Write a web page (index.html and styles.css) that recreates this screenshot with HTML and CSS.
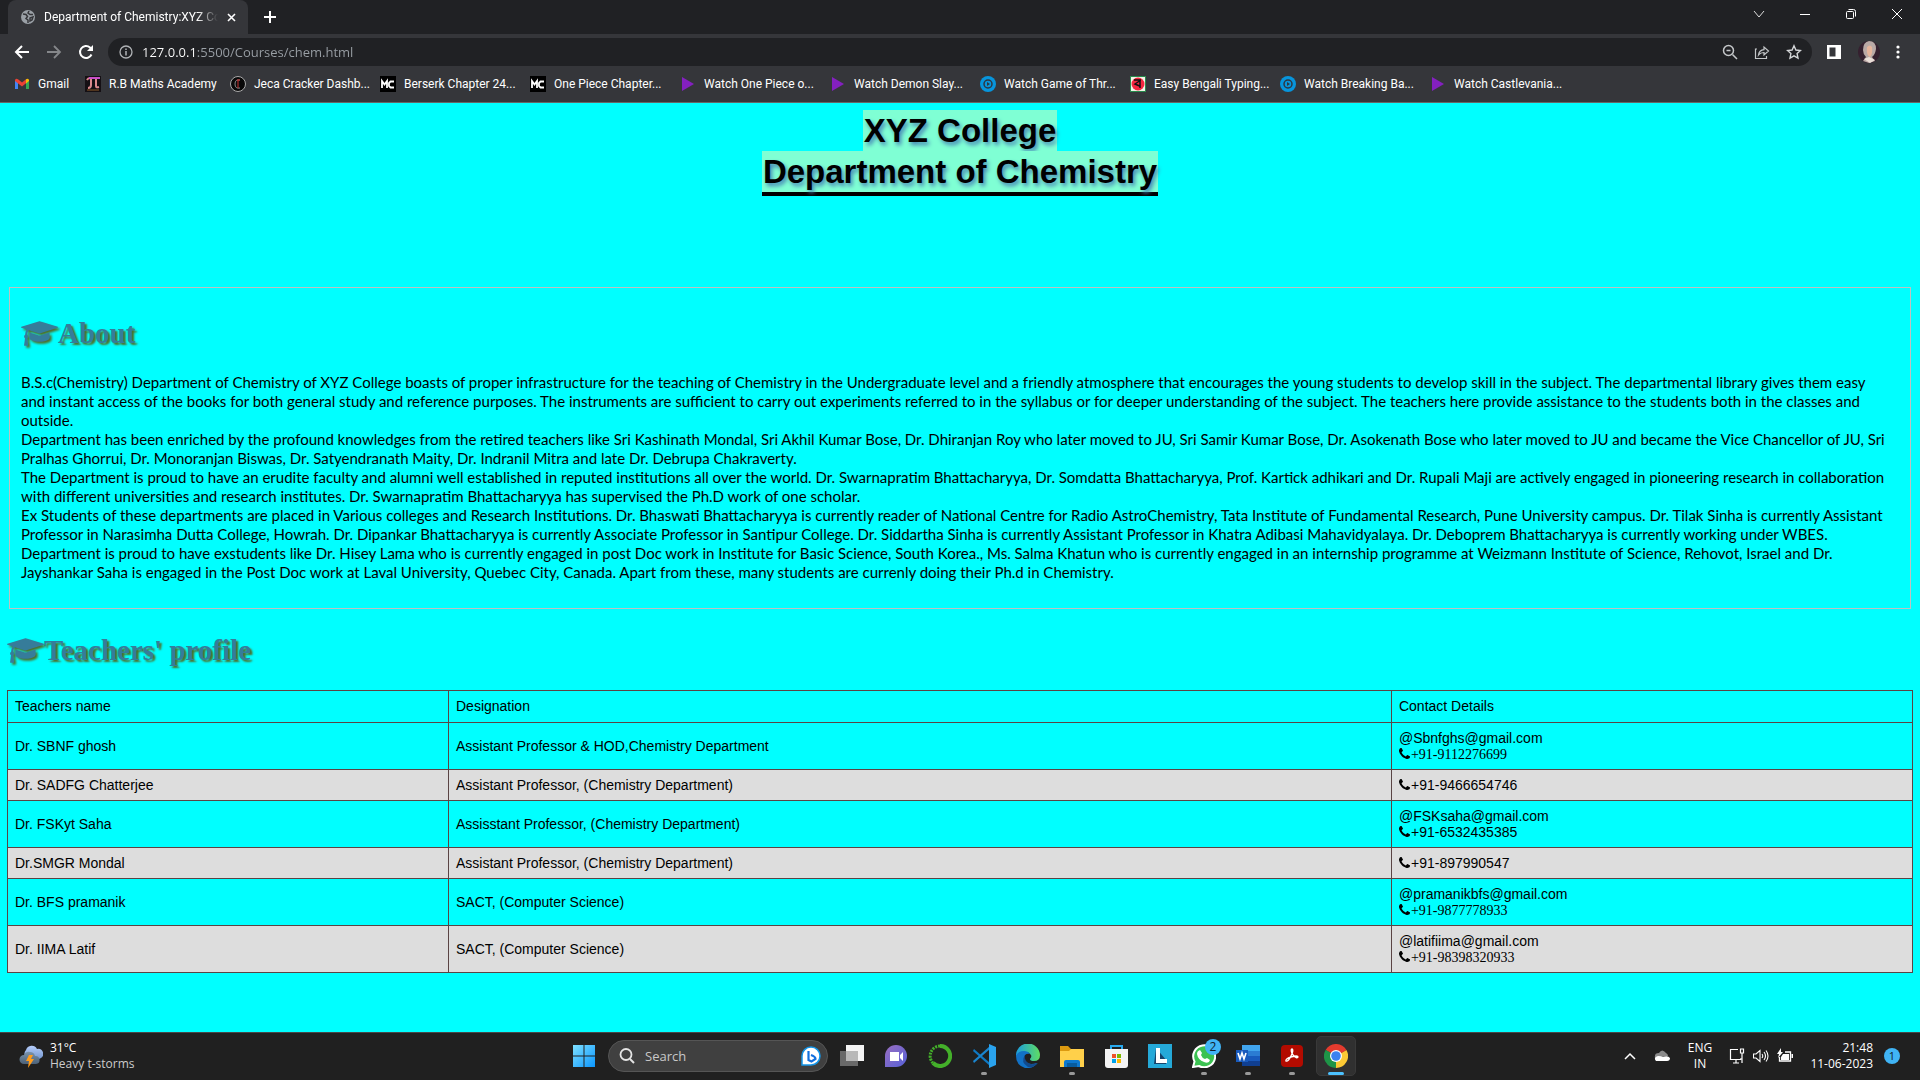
FILE: index.html
```html
<!DOCTYPE html>
<html lang="en">
<head>
<meta charset="utf-8">
<title>Department of Chemistry:XYZ College</title>
<link rel="stylesheet" href="styles.css">
</head>
<body>
<svg class="defs" width="0" height="0" aria-hidden="true">
  <defs>
    <symbol id="cap" viewBox="0 0 2304 1792"><path d="M1774 836l18 316q4 69-82 128t-235 93.500-323 34.500-323-34.500-235-93.500-82-128l18-316 574 181q22 7 48 7t48-7zM2304 512q0 23-22 31l-1120 352q-4 1-10 1t-10-1L490 690q-43 34-71 111.500T385 980q63 36 63 109 0 69-58 107l58 433q2 14-8 25-9 11-24 11H224q-15 0-24-11-10-11-8-25l58-433q-58-38-58-107 0-73 65-111 11-207 98-330L22 543Q0 535 0 512t22-31L1142 129q4-1 10-1t10 1l1120 352q22 8 22 31z"/></symbol>
    <symbol id="phone" viewBox="192 128 1408 1408"><path d="M1600 1240q0 27-10 70.500t-21 68.500q-21 50-122 106-94 51-186 51-27 0-53-3.500t-57.500-12.500-47-14.500T1048 1485t-49-18q-98-35-175-83-127-79-264-216T344 904q-48-77-83-175-3-9-18-49t-20.500-55.500-14.500-47T195.500 520t-3.500-53q0-92 51-186 56-101 106-122 25-11 68.500-21t70.500-10q14 0 21 3 18 6 53 76 11 19 30 54t35 63.500 31 53.500q3 4 17.500 25t21.500 35.500 7 28.500q0 20-28.500 50t-62 55-62 53-28.500 46q0 9 5 22.500t8.500 20.500 14 24 11.500 19q76 137 174 235t235 174q2 1 19 11.500t24 14 20.500 8.500 22.500 5q18 0 46-28.500t53-62 55-62 50-28.500q14 0 28.500 7t35.500 21.500 25 17.500q25 15 53.500 31t63.500 35 54 30q70 35 76 53 3 7 3 21z"/></symbol>
    <symbol id="play" viewBox="0 0 16 16"><path d="M2 1l12 7-12 7z" fill="#8420c0"/></symbol>
    <symbol id="disc" viewBox="0 0 16 16"><circle cx="8" cy="8" r="8" fill="#0795dc"/><circle cx="8" cy="8" r="4" fill="none" stroke="#2f3740" stroke-width="1.500"/><path d="M7 6l3 2-3 2z" fill="#2f3740"/></symbol>
    <symbol id="mc" viewBox="0 0 16 16"><path d="M0 0h16v16H0z" fill="#000"/><path d="M2 12V5l2.500 3.500L7 5v7M14 5.500h-3.500L9 7v3l1.500 1.500H14" fill="none" stroke="#fff" stroke-width="1.800"/></symbol>
  </defs>
</svg>

<header class="browser">
  <div class="tabstrip">
    <div class="tab">
      <svg width="14" height="14" viewBox="0 0 14 14"><circle cx="7" cy="7" r="7" fill="#9aa0a6"/><path d="M2 4l3 .5 1.500 2L5 8.500 7 10v3M8 1l-1 2 2 1.500h3M9 8l3-1-1 3-2 1z" fill="none" stroke="#35363a" stroke-width="1.500"/></svg>
      <span class="tab-title">Department of Chemistry:XYZ College</span>
      <button class="plain" aria-label="Close tab"><svg width="9" height="9" viewBox="0 0 9 9"><path d="M1 1l7 7M8 1L1 8" stroke="#fff" stroke-width="1.600"/></svg></button>
    </div>
    <button class="plain new-tab" aria-label="New tab"><svg width="12" height="12" viewBox="0 0 12 12"><path d="M6 0v12M0 6h12" stroke="#fff" stroke-width="2"/></svg></button>
    <div class="window-controls">
      <button class="plain" aria-label="Search tabs"><svg width="12" height="12" viewBox="0 0 12 12"><path d="M1 3l5 6 5-6" fill="none" stroke="#ddd"/></svg></button>
      <button class="plain" aria-label="Minimize"><svg width="10" height="12" viewBox="0 0 10 12"><path d="M0 6.500h10" stroke="#fff"/></svg></button>
      <button class="plain" aria-label="Restore"><svg width="12" height="12" viewBox="0 0 12 12"><rect x="1.500" y="3.500" width="7" height="7" rx="1" fill="none" stroke="#fff"/><path d="M3.500 1.500h5a2 2 0 0 1 2 2v5" fill="none" stroke="#fff"/></svg></button>
      <button class="plain" aria-label="Close"><svg width="12" height="12" viewBox="0 0 12 12"><path d="M1 1l10 10M11 1L1 11" stroke="#fff"/></svg></button>
    </div>
  </div>

  <div class="toolbar">
    <div class="nav-buttons">
      <button class="plain" aria-label="Back"><svg width="16" height="16" viewBox="0 0 16 16"><path d="M15 8H2M8 2L2 8l6 6" fill="none" stroke="#fff" stroke-width="2"/></svg></button>
      <button class="plain" aria-label="Forward"><svg width="16" height="16" viewBox="0 0 16 16"><path d="M1 8h13M8 2l6 6-6 6" fill="none" stroke="#85878a" stroke-width="1.800"/></svg></button>
      <button class="plain" aria-label="Reload"><svg width="16" height="16" viewBox="0 0 16 16"><path d="M13.500 10.500A6 6 0 1 1 12 3.500l1.500 1.500" fill="none" stroke="#fff" stroke-width="2"/><path d="M15 1v6H9z" fill="#fff"/></svg></button>
    </div>
    <div class="omnibox">
      <svg width="14" height="14" viewBox="0 0 14 14"><circle cx="7" cy="7" r="6" fill="none" stroke="#b0b3b6" stroke-width="1.300"/><path d="M7 6v4.500M7 3.500V5" stroke="#b0b3b6" stroke-width="1.500"/></svg>
      <input class="url" type="text" aria-label="Address" value="127.0.0.1:5500/Courses/chem.html">
      <button class="plain" aria-label="Zoom"><svg width="16" height="16" viewBox="0 0 16 16"><circle cx="6.500" cy="6.500" r="5" fill="none" stroke="#c4c7c9" stroke-width="1.500"/><path d="M10.500 10.500L15 15M4.500 6.500h4" stroke="#c4c7c9" stroke-width="1.500"/></svg></button>
      <button class="plain" aria-label="Share"><svg width="16" height="16" viewBox="0 0 16 16"><path d="M3 5H1.500v9.500h11V12M4.500 11c.5-4 2.500-5 5.500-5.300V3l4.500 4-4.500 4V8.500C7.500 8.500 6 9 4.500 11z" fill="none" stroke="#c4c7c9" stroke-width="1.200"/></svg></button>
      <button class="plain" aria-label="Bookmark"><svg width="16" height="16" viewBox="0 0 16 16"><path d="M8 1.800l1.900 4.200 4.600.5-3.400 3.100.9 4.600L8 11.900l-4 2.300.9-4.600L1.500 6.500 6.100 6z" fill="none" stroke="#d4d6d8" stroke-width="1.400"/></svg></button>
    </div>
    <div class="profile-buttons">
      <button class="plain" aria-label="Side panel"><svg width="14" height="14" viewBox="0 0 14 14"><path d="M0 0h14v14H0zM2.500 2.500v9h6v-9z" fill="#fff" fill-rule="evenodd"/></svg></button>
      <button class="plain" aria-label="Profile"><svg width="22" height="22" viewBox="0 0 22 22"><circle cx="11" cy="11" r="11" fill="#35202f"/><path d="M5 9Q5 1 11 0q7 0 7 8-1 6-4 8l3 4-6 2-6-2 3-4Q5 13 5 9z" fill="#b9a9a6"/><path d="M9 6q3-3 5 0 1 7-2 10-4-2-3-10z" fill="#e6b49c"/><path d="M6 18l5-2 6 3-5 3z" fill="#eadfd8"/></svg></button>
      <button class="plain" aria-label="Menu"><svg width="4" height="14" viewBox="0 0 4 14"><circle cx="2" cy="2" r="1.600" fill="#fff"/><circle cx="2" cy="7" r="1.600" fill="#fff"/><circle cx="2" cy="12" r="1.600" fill="#fff"/></svg></button>
    </div>
  </div>

  <nav class="bookmarks" aria-label="Bookmarks">
    <a class="bookmark short" href="#"><svg viewBox="0 0 16 16"><path d="M1 13V4l3 2v7z" fill="#4285f4"/><path d="M12 6l3-2v9h-3z" fill="#34a853"/><path d="M1 4q1-2 3-.7L8 6.500l4-3.200v4L8 10.500 1 5z" fill="#ea4335"/><path d="M12 3.300Q14 2 15 4v1l-3 2.500z" fill="#fbbc04"/></svg>Gmail</a>
    <a class="bookmark medium" href="#"><svg viewBox="0 0 16 16"><path d="M0 0h16v16H0z" fill="#151014"/><path d="M2 4q1-2 3-2h10M6 2v7q0 3-3 3M11 2v8q0 2 3 1" fill="none" stroke="#dc8a8e" stroke-width="2"/><path d="M4 2h11" stroke="#c94fc8" stroke-width="2"/><path d="M2 14h12" stroke="#8b5b28"/></svg>R.B Maths Academy</a>
    <a class="bookmark" href="#"><svg viewBox="0 0 16 16"><circle cx="8" cy="8" r="7.500" fill="#080808" stroke="#aaa"/><path d="M10 4q-5-1-5 4t5 4" fill="none" stroke="#888"/><path d="M8 4v8M7 4h3" stroke="#c53030"/></svg>Jeca Cracker Dashb...</a>
    <a class="bookmark" href="#"><svg><use href="#mc"/></svg>Berserk Chapter 24...</a>
    <a class="bookmark" href="#"><svg><use href="#mc"/></svg>One Piece Chapter...</a>
    <a class="bookmark" href="#"><svg><use href="#play"/></svg>Watch One Piece o...</a>
    <a class="bookmark" href="#"><svg><use href="#play"/></svg>Watch Demon Slay...</a>
    <a class="bookmark" href="#"><svg><use href="#disc"/></svg>Watch Game of Thr...</a>
    <a class="bookmark" href="#"><svg viewBox="0 0 16 16"><path d="M.5.500h15v15H.5z" fill="#f4f4e8" stroke="#268b4c"/><circle cx="8" cy="8" r="6.500" fill="#f5273f"/><path d="M4 4h7M10 4v8M9.500 5L5 8l4.500 2" fill="none" stroke="#111" stroke-width="1.500"/></svg>Easy Bengali Typing...</a>
    <a class="bookmark" href="#"><svg><use href="#disc"/></svg>Watch Breaking Ba...</a>
    <a class="bookmark" href="#"><svg><use href="#play"/></svg>Watch Castlevania...</a>
  </nav>
</header>

<main class="page">
  <h1 class="banner">
    <span class="banner-line">XYZ College</span>
    <span class="banner-line underlined">Department of Chemistry</span>
  </h1>

  <section class="about">
    <h2><svg class="cap"><use href="#cap"/></svg>About</h2>
    <p>B.S.c(Chemistry) Department of Chemistry of XYZ College boasts of proper infrastructure for the teaching of Chemistry in the Undergraduate level and a friendly atmosphere that encourages the young students to develop skill in the subject. The departmental library gives them easy<br>
    and instant access of the books for both general study and reference purposes. The instruments are sufficient to carry out experiments referred to in the syllabus or for deeper understanding of the subject. The teachers here provide assistance to the students both in the classes and<br>
    outside.</p>
    <p>Department has been enriched by the profound knowledges from the retired teachers like Sri Kashinath Mondal, Sri Akhil Kumar Bose, Dr. Dhiranjan Roy who later moved to JU, Sri Samir Kumar Bose, Dr. Asokenath Bose who later moved to JU and became the Vice Chancellor of JU, Sri<br>
    Pralhas Ghorrui, Dr. Monoranjan Biswas, Dr. Satyendranath Maity, Dr. Indranil Mitra and late Dr. Debrupa Chakraverty.</p>
    <p>The Department is proud to have an erudite faculty and alumni well established in reputed institutions all over the world. Dr. Swarnapratim Bhattacharyya, Dr. Somdatta Bhattacharyya, Prof. Kartick adhikari and Dr. Rupali Maji are actively engaged in pioneering research in collaboration<br>
    with different universities and research institutes. Dr. Swarnapratim Bhattacharyya has supervised the Ph.D work of one scholar.</p>
    <p>Ex Students of these departments are placed in Various colleges and Research Institutions. Dr. Bhaswati Bhattacharyya is currently reader of National Centre for Radio AstroChemistry, Tata Institute of Fundamental Research, Pune University campus. Dr. Tilak Sinha is currently Assistant<br>
    Professor in Narasimha Dutta College, Howrah. Dr. Dipankar Bhattacharyya is currently Associate Professor in Santipur College. Dr. Siddartha Sinha is currently Assistant Professor in Khatra Adibasi Mahavidyalaya. Dr. Deboprem Bhattacharyya is currently working under WBES.</p>
    <p>Department is proud to have exstudents like Dr. Hisey Lama who is currently engaged in post Doc work in Institute for Basic Science, South Korea., Ms. Salma Khatun who is currently engaged in an internship programme at Weizmann Institute of Science, Rehovot, Israel and Dr.<br>
    Jayshankar Saha is engaged in the Post Doc work at Laval University, Quebec City, Canada. Apart from these, many students are currenly doing their Ph.d in Chemistry.</p>
  </section>

  <section class="teachers">
    <h2><svg class="cap"><use href="#cap"/></svg>Teachers' profile</h2>
    <table>
      <colgroup><col class="col-name"><col class="col-role"><col></colgroup>
      <thead>
        <tr><th>Teachers name</th><th>Designation</th><th>Contact Details</th></tr>
      </thead>
      <tbody>
        <tr><td>Dr. SBNF ghosh</td><td>Assistant Professor &amp; HOD,Chemistry Department</td><td>@Sbnfghs@gmail.com<br><svg class="phone"><use href="#phone"/></svg><span class="serif">+91-9112276699</span></td></tr>
        <tr><td>Dr. SADFG Chatterjee</td><td>Assistant Professor, (Chemistry Department)</td><td><svg class="phone"><use href="#phone"/></svg>+91-9466654746</td></tr>
        <tr><td>Dr. FSKyt Saha</td><td>Assisstant Professor, (Chemistry Department)</td><td>@FSKsaha@gmail.com<br><svg class="phone"><use href="#phone"/></svg>+91-6532435385</td></tr>
        <tr><td>Dr.SMGR Mondal</td><td>Assistant Professor, (Chemistry Department)</td><td><svg class="phone"><use href="#phone"/></svg>+91-897990547</td></tr>
        <tr><td>Dr. BFS pramanik</td><td>SACT, (Computer Science)</td><td>@pramanikbfs@gmail.com<br><svg class="phone"><use href="#phone"/></svg><span class="serif">+91-9877778933</span></td></tr>
        <tr><td>Dr. IIMA Latif</td><td>SACT, (Computer Science)</td><td>@latifiima@gmail.com<br><svg class="phone"><use href="#phone"/></svg><span class="serif">+91-98398320933</span></td></tr>
      </tbody>
    </table>
  </section>
</main>

<footer class="taskbar">
  <button class="plain weather">
    <svg width="24" height="24" viewBox="0 0 24 24"><defs><linearGradient id="cl" x2="0" y2="1"><stop stop-color="#b5cdfa"/><stop offset="1" stop-color="#6f92cc"/></linearGradient><linearGradient id="cd" x2="0" y2="1"><stop stop-color="#7b93ab"/><stop offset="1" stop-color="#4b6178"/></linearGradient></defs><path d="M8 14a5 5 0 0 1-1-8 6 6 0 0 1 11-1 5 5 0 0 1 4 9l-4 2z" fill="url(#cl)"/><path d="M5 20a4.500 4.500 0 0 1 0-9q2-4 6-3 4 0 5 4a4 4 0 0 1 1 8z" fill="url(#cd)"/><path d="M10 11h4l-2 4h3l-6 9 1-7H7z" fill="#ff9d1c"/></svg>
    <span class="weather-text"><span class="bright">31°C</span><span>Heavy t-storms</span></span>
  </button>

  <div class="apps">
    <button class="plain app" aria-label="Start"><svg viewBox="0 0 24 24"><defs><linearGradient id="win" x2="1" y2="1"><stop stop-color="#7ee0ff"/><stop offset="1" stop-color="#0a96ff"/></linearGradient></defs><path d="M1 1h10.500v10.500H1zM12.500 1H23v10.500H12.500zM1 12.500h10.500V23H1zM12.500 12.500H23V23H12.500z" fill="url(#win)"/></svg></button>
    <label class="search">
      <svg width="16" height="16" viewBox="0 0 16 16"><circle cx="7" cy="6.500" r="5.500" fill="none" stroke="#e4e4e4" stroke-width="1.800"/><path d="M11 11l4 4" stroke="#e4e4e4" stroke-width="2"/></svg>
      <input type="search" placeholder="Search" aria-label="Search">
      <svg width="20" height="20" viewBox="0 0 20 20"><path d="M1 19V10a9 9 0 1 1 9 9z" fill="#fff" stroke="#1495e8" stroke-width="1.500"/><path d="M7.500 5v9l3 1.500 4-2.500q0-2.500-4.500-4" fill="none" stroke="#126fdd" stroke-width="2.200"/></svg>
    </label>
    <button class="plain app" aria-label="Task view"><svg viewBox="0 0 24 24"><path d="M6 1h18v16H6z" fill="#f4f4f4"/><path d="M0 7h18v15H0z" fill="#777" opacity=".85"/><path d="M6 7h12v10H6z" fill="#b8b8b8"/></svg></button>
    <button class="plain app" aria-label="Chat"><svg viewBox="0 0 24 24"><defs><linearGradient id="chat" x2="1" y2="1"><stop stop-color="#9a6fc0"/><stop offset="1" stop-color="#5560d8"/></linearGradient></defs><path d="M1 23V12A11 11 0 1 1 12 23z" fill="url(#chat)"/><path d="M6 8h9v9H6zM16 11l3-3v9l-3-3z" fill="#fff"/></svg></button>
    <button class="plain app" aria-label="Anaconda"><svg viewBox="0 0 24 24"><path d="M12 2a10 10 0 1 1-7 17" fill="none" stroke="#44b02a" stroke-width="4"/><path d="M5 19A10 10 0 0 1 12 2" fill="none" stroke="#44b02a" stroke-width="3" stroke-dasharray="2 1"/></svg></button>
    <button class="plain app running" aria-label="Visual Studio Code"><svg viewBox="0 0 24 24"><path d="M2 5l16 14v3L1 7z" fill="#0f79c4"/><path d="M2 19L18 5V2L1 17z" fill="#1a85cf"/><path d="M17 0l7 3v18l-7 3z" fill="#2aa3ee"/></svg></button>
    <button class="plain app" aria-label="Edge"><svg viewBox="0 0 24 24"><defs><linearGradient id="edge" x2="1"><stop stop-color="#1a9de0"/><stop offset="1" stop-color="#5fdd62"/></linearGradient></defs><path d="M0 12a12 12 0 0 1 24-1q0 6-6 6-4 0-4-2 2-2 1-4-3-5-9-2-4 2-6 3z" fill="url(#edge)"/><path d="M0 12q2-5 8-5 4 0 6 3-6-1-6 5 2 7 13 4-4 6-12 5Q0 21 0 12z" fill="#1272c6"/><path d="M9 11q-5 7 3 12 6 1 10-4-8 3-12-2-2-3-1-6z" fill="#124a8c"/></svg></button>
    <button class="plain app running" aria-label="File Explorer"><svg viewBox="0 0 24 24"><path d="M0 2h8l3 3h13v8H0z" fill="#dc9a10"/><path d="M0 7h9l2-2h13v18H0z" fill="#ffd04a"/><path d="M4 23v-5q0-2 2-2h12q2 0 2 2v5z" fill="#0d78cf"/><path d="M7 19h10v4H7z" fill="#085c9e"/></svg></button>
    <button class="plain app" aria-label="Microsoft Store"><svg viewBox="0 0 24 24"><path d="M7 7V2h11v5" fill="none" stroke="#28a9ee" stroke-width="2"/><path d="M1 5h23v16q0 3-3 3H4q-3 0-3-3z" fill="#f4f4f4"/><path d="M8 10h4v4H8z" fill="#f0512a"/><path d="M13 10h4v4h-4z" fill="#7db900"/><path d="M8 15h4v4H8z" fill="#00a3ec"/><path d="M13 15h4v4h-4z" fill="#ffb700"/></svg></button>
    <button class="plain app" aria-label="L"><svg viewBox="0 0 24 24"><path d="M0 0h24v24H0z" fill="#25a9d8"/><path d="M8 4L6 20h12l1-3z" fill="#17446b"/><path d="M8 4h4v11h7v4H8z" fill="#fff"/></svg></button>
    <button class="plain app running" aria-label="WhatsApp"><svg viewBox="0 0 24 24"><path d="M1 23l1.500-5.500A11 11 0 1 1 7 22z" fill="#3cc252" stroke="#fff" stroke-width="2"/><path d="M8 6l2 3-1 2q1 3 4 4l2-1 3 2q-1 4-6 2-6-2-7-8 0-3 3-4z" fill="#fff"/></svg><span class="badge">2</span></button>
    <button class="plain app running" aria-label="Word"><svg viewBox="0 0 24 24"><path d="M6 1h18v6H6z" fill="#41a5ee"/><path d="M6 7h18v5H6z" fill="#2b7cd3"/><path d="M6 12h18v5H6z" fill="#185abd"/><path d="M6 17h18v5H6z" fill="#103f91"/><path d="M0 6h12v12H0z" fill="#185abd"/><path d="M2 9l2 6 2-6 2 6 2-6" fill="none" stroke="#fff" stroke-width="1.600"/></svg></button>
    <button class="plain app running" aria-label="Acrobat"><svg viewBox="0 0 24 24"><rect x="1" y="1" width="22" height="22" rx="4" fill="#b30b00"/><path d="M6 17q-1-2 5-4 7-2 7 0-1 2-5-2-3-5-1-6 2 1-1 7-3 6-5 5z" fill="none" stroke="#fff" stroke-width="1.400"/></svg></button>
    <button class="plain app active" aria-label="Chrome"><svg viewBox="0 0 24 24"><path d="M12 12L1.600 6A12 12 0 0 1 22.400 6z" fill="#e33b2e"/><path d="M12 12L22.400 6A12 12 0 0 1 12 24z" fill="#fcc934"/><path d="M12 12v12A12 12 0 0 1 1.600 6z" fill="#1e9447"/><path d="M12 6h10.400L12 12z" fill="#e33b2e"/><path d="M7 15L1.600 6 12 12z" fill="#1e9447"/><path d="M17 15l-5 9v-9z" fill="#fcc934"/><circle cx="12" cy="12" r="6" fill="#fff"/><circle cx="12" cy="12" r="4.800" fill="#3b82f0"/></svg></button>
  </div>

  <div class="tray">
    <button class="plain" aria-label="Hidden icons"><svg width="12" height="8" viewBox="0 0 12 8"><path d="M1 7l5-5 5 5" fill="none" stroke="#fff" stroke-width="1.500"/></svg></button>
    <button class="plain cloud" aria-label="OneDrive"><svg width="16" height="12" viewBox="0 0 16 12"><path d="M1 8Q0 3 5 3q3-5 7 0 2 1 2 3z" fill="#8b8b8b"/><path d="M2 11q-3-4 2-5 3 0 5 1 5-2 7 1 0 3-3 3z" fill="#fff"/></svg></button>
    <button class="plain lang"><span>ENG</span><span>IN</span></button>
    <button class="plain status" aria-label="Network, volume and battery">
      <svg width="16" height="16" viewBox="0 0 16 16"><path d="M9 1.500H1.500v10H12V10M7 12v3M4 15h6" fill="none" stroke="#fff" stroke-width="1.200"/><path d="M11.500 1h3v4h-3zM13 5v10" fill="none" stroke="#fff" stroke-width="1.200"/></svg>
      <svg width="16" height="16" viewBox="0 0 16 16"><path d="M.5 6H3l4-3.500v11L3 10H.5zM9 6q1.500 2 0 4M11 4q3 4 0 8M13 2.500q4 5.500 0 11" fill="none" stroke="#fff" stroke-width="1.100"/></svg>
      <svg width="17" height="16" viewBox="0 0 17 16"><path d="M8 4h5.500v9h-11V9" fill="none" stroke="#fff" stroke-width="1.300"/><path d="M6 6h6v6H4V9zM14.500 6H16v4h-1.500zM4 0L0 6h2L1 10l5-6H4z" fill="#fff"/></svg>
    </button>
    <button class="plain clock"><span>21:48</span><span>11-06-2023</span></button>
    <button class="plain notices">1</button>
  </div>
</footer>
</body>
</html>
```
FILE: styles.css
```css
* {
  box-sizing: border-box;
}

body {
  margin: 0;
  min-height: 100vh;
  display: flex;
  flex-direction: column;
  background: #00ffff;
  color: #000;
  font-family: "Liberation Sans", sans-serif;
  font-size: 14px;
}

.defs {
  position: absolute;
}

svg {
  flex: none;
}

.plain {
  display: flex;
  align-items: center;
  justify-content: center;
  padding: 0;
  border: 0;
  background: none;
  color: inherit;
  font: inherit;
}

/* Browser window */
.browser {
  background: #35363a;
  border-bottom: 1px solid #666;
  color: #fff;
  font-family: Roboto, sans-serif;
  font-size: 12px;
}

.tabstrip {
  display: flex;
  height: 34px;
  padding-left: 8px;
  background: #202124;
}

.tab {
  display: flex;
  align-items: center;
  width: 240px;
  padding: 0 12px 0 13px;
  border-radius: 8px 8px 0 0;
  background: #35363a;
}

.tab-title {
  flex: 1;
  margin: 0 9px;
  overflow: hidden;
  white-space: nowrap;
  -webkit-mask-image: linear-gradient(to right, #000 88%, transparent);
  mask-image: linear-gradient(to right, #000 88%, transparent);
}

.new-tab {
  width: 44px;
}

.window-controls {
  display: flex;
  height: 28px;
  margin-left: auto;
}

.window-controls button {
  width: 46px;
}

.toolbar {
  display: flex;
  align-items: center;
  height: 36px;
}

.nav-buttons {
  display: flex;
  width: 108px;
  gap: 16px;
  padding-left: 14px;
}

.omnibox {
  display: flex;
  flex: 1;
  align-items: center;
  height: 28px;
  gap: 16px;
  padding: 0 10px 0 11px;
  border-radius: 14px;
  background: #202124;
}

.url {
  flex: 1;
  padding: 0;
  margin-left: -7px;
  border: 0;
  background: linear-gradient(to right, #fff 54px, #9aa0a6 54px);
  -webkit-background-clip: text;
  background-clip: text;
  color: transparent;
  font-family: "Open Sans", sans-serif;
  font-size: 13px;
}

.profile-buttons {
  display: flex;
  align-items: center;
  justify-content: space-between;
  width: 108px;
  padding: 0 20px 0 15px;
}

.bookmarks {
  display: flex;
  align-items: center;
  height: 32px;
  padding: 0 14px 4px;
}

.bookmark {
  display: flex;
  flex: none;
  align-items: center;
  width: 150px;
  gap: 8px;
  color: #fff;
  text-decoration: none;
  white-space: nowrap;
  font-size: 12px;
}

.bookmark.short {
  width: 71px;
}

.bookmark.medium {
  width: 145px;
}

.bookmark svg {
  width: 16px;
  height: 16px;
}

/* Department page */
.page {
  flex: 1;
  padding: 7px 7px 0;
}

.banner {
  display: flex;
  flex-direction: column;
  align-items: center;
  margin: 0 0 91px;
  font-size: 33px;
  line-height: 41px;
  text-shadow: 2px 3px 4px #4682b4;
}

.banner-line {
  padding: 0 1px;
  background: #7fffd4;
}

.underlined {
  border-bottom: 4px solid #000;
}

h2 {
  display: flex;
  align-items: center;
  margin: 0 0 23px;
  color: #367c9a;
  font-family: "Liberation Serif", serif;
  font-size: 29px;
  line-height: 33px;
  text-shadow: 2px 2px 2px #4f6f28;
}

.cap {
  width: 37px;
  height: 29px;
  fill: #367c9a;
  filter: drop-shadow(2px 2px 1px #4f6f28);
}

.about {
  margin: 0 2px 25px;
  padding: 29px 10px 26px 11px;
  border: 1px solid #c0c0c0;
}

.about p {
  margin: 0;
  font-family: Lato, sans-serif;
  font-size: 15px;
  line-height: 19px;
}

table {
  width: 100%;
  border-collapse: collapse;
  table-layout: fixed;
}

.col-name {
  width: 23.15%;
}

.col-role {
  width: 49.5%;
}

th,
td {
  padding: 7px;
  border: 1px solid #5a4444;
  font-size: 14px;
  font-weight: normal;
  line-height: 16px;
  text-align: left;
}

th {
  padding-bottom: 8px;
}

tbody tr:nth-child(even) {
  background: #dddddd;
}

.phone {
  width: 11px;
  height: 11px;
  margin-right: 1px;
}

.serif {
  font-family: "Liberation Serif", serif;
  line-height: 12px;
}

/* Taskbar */
.taskbar {
  display: grid;
  grid-template-columns: 1fr auto 1fr;
  height: 48px;
  background: #202020;
  box-shadow: inset 0 1px #484848;
  color: #fff;
  font-family: "Open Sans", sans-serif;
  font-size: 12px;
  line-height: 16px;
}

.weather {
  justify-self: start;
  gap: 7px;
  padding-left: 19px;
  color: #ccc;
}

.weather-text {
  display: flex;
  flex-direction: column;
  text-align: left;
}

.bright {
  color: #fff;
}

.apps {
  display: flex;
  align-items: center;
}

.app {
  position: relative;
  width: 40px;
  height: 40px;
  margin: 0 2px;
  border-radius: 5px;
}

.app svg {
  width: 24px;
  height: 24px;
}

.running::after,
.active::after {
  content: "";
  position: absolute;
  bottom: 1px;
  left: 17px;
  width: 6px;
  height: 3px;
  border-radius: 2px;
  background: #999;
}

.active {
  background: #303030;
  border: 1px solid #393939;
}

.active::after {
  bottom: 0;
  left: 11px;
  width: 16px;
  background: #4cc2ff;
}

.badge {
  position: absolute;
  top: 3px;
  right: 3px;
  width: 16px;
  height: 16px;
  border-radius: 8px;
  background: #40b4f5;
  color: #10202c;
  text-align: center;
}

.search {
  display: flex;
  align-items: center;
  width: 220px;
  height: 32px;
  gap: 10px;
  margin: 0 2px;
  padding: 0 6px 0 10px;
  border: 1px solid #555;
  border-radius: 16px;
  background: #404040;
}

.search input {
  flex: 1;
  min-width: 0;
  padding: 0;
  border: 0;
  background: none;
  color: #ccc;
  font-family: "Open Sans", sans-serif;
  font-size: 13px;
}

.search input::placeholder {
  color: #c8c8c8;
}

.tray {
  display: flex;
  align-items: center;
  justify-content: flex-end;
  padding-right: 20px;
}

.cloud {
  margin: 0 16px 0 18px;
}

.lang {
  flex-direction: column;
  width: 28px;
}

.status {
  gap: 8px;
  margin: 0 15px;
}

.clock {
  flex-direction: column;
  align-items: flex-end;
  width: 64px;
}

.notices {
  width: 16px;
  height: 16px;
  margin-left: 11px;
  border-radius: 8px;
  background: #40b4f5;
  color: #10202c;
  font-size: 11px;
}
```
